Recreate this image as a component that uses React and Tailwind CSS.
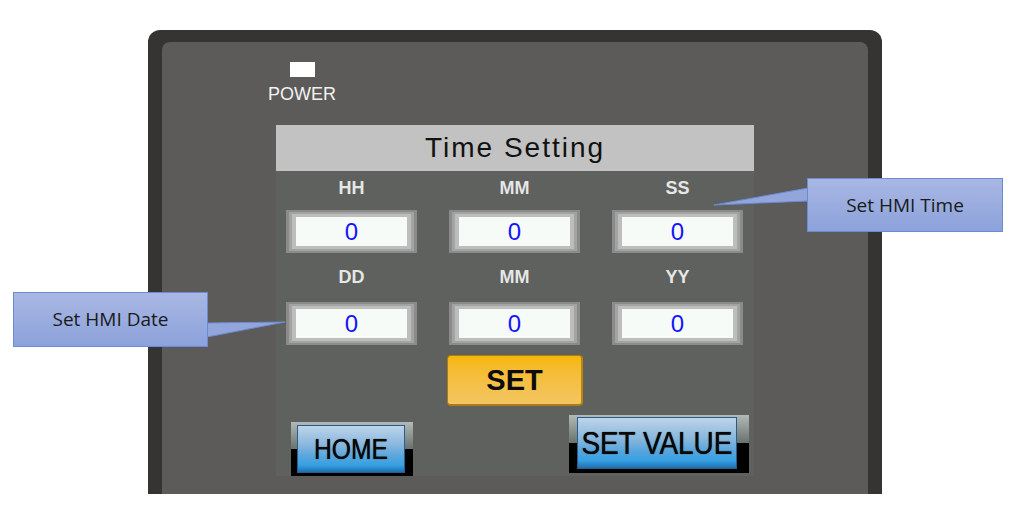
import React from "react";

function ValueBox({ value }) {
  return (
    <div className="w-[131px] h-[43px] bg-[#8b8b8b] px-[3px] py-[2px]">
      <div className="h-full bg-[#a3a3a3] px-[3px] py-[2px]">
        <div className="h-full bg-[#bdbdbd] px-[4px] py-[3px]">
          <div className="h-full bg-[#f6fbf7] flex items-center justify-center text-[24px] leading-none text-[#1414ff] font-['Liberation_Sans',Arial,sans-serif]">
            {value}
          </div>
        </div>
      </div>
    </div>
  );
}

function Label({ children }) {
  return (
    <div className="w-[131px] h-[22px] leading-[22px] text-center font-bold text-[18px] text-[#e6e6e6] font-['Liberation_Sans',Arial,sans-serif]">
      {children}
    </div>
  );
}

export default function App() {
  return (
    <div className="relative w-[1024px] h-[532px] bg-white overflow-hidden font-['Liberation_Sans',Arial,sans-serif]">
      <div className="pt-[30px] pl-[148px]">
        {/* HMI frame */}
        <div className="w-[734px] h-[464px] bg-[#353432] rounded-t-[12px] pt-[12px] px-[14px] flex flex-col">
          <div className="flex-1 bg-[#5c5b59] rounded-t-[8px] flex flex-col">
            {/* Power LED */}
            <div className="ml-[105px] w-[70px] pt-[20px] flex flex-col items-center">
              <div className="w-[25px] h-[15px] bg-white" />
              <div className="mt-[7px] h-[20px] leading-[20px] text-[18px] text-[#f2f2f2]">POWER</div>
            </div>

            {/* Screen */}
            <div className="ml-[114px] mt-[21px] w-[478px] h-[351px] flex flex-col">
              <div className="h-[46px] bg-[#c2c2c2] flex items-center justify-center text-[28px] tracking-[2px] text-[#111]">
                Time Setting
              </div>
              <div className="flex-1 bg-[#5e615d] flex flex-col pt-[6px]">
                <div className="flex gap-[32px] pl-[10px]">
                  <Label>HH</Label>
                  <Label>MM</Label>
                  <Label>SS</Label>
                </div>
                <div className="flex gap-[32px] pl-[10px] mt-[11px]">
                  <ValueBox value="0" />
                  <ValueBox value="0" />
                  <ValueBox value="0" />
                </div>
                <div className="flex gap-[32px] pl-[10px] mt-[13px]">
                  <Label>DD</Label>
                  <Label>MM</Label>
                  <Label>YY</Label>
                </div>
                <div className="flex gap-[32px] pl-[10px] mt-[14px]">
                  <ValueBox value="0" />
                  <ValueBox value="0" />
                  <ValueBox value="0" />
                </div>

                {/* SET button */}
                <div className="mt-[10px] flex justify-center">
                  <div className="w-[136px] h-[51px] rounded-[4px] border border-[#a97c14] border-r-[2px] border-b-[2px] border-r-[#b8860e] bg-linear-to-b from-[#f6b700] to-[#f4c660] flex items-center justify-center text-[29px] font-bold text-[#0c0c0c] leading-none">
                    SET
                  </div>
                </div>

                {/* Bottom buttons */}
                <div className="mt-[9px] flex justify-between items-start pl-[15px] pr-[5px]">
                  <div className="mt-[7px] w-[122px] h-[54px] bg-[linear-gradient(to_bottom,#b2bab8_0%,#6a7270_50%,#000_50%,#000_100%)] pl-[6px] pr-[8px] pt-[3px] pb-[3px]">
                    <div className="h-full border border-[#2b5d8c] bg-[linear-gradient(to_bottom,#bcd4ea_0%,#8bb8de_40%,#5aa6dc_65%,#36a0e4_85%,#1f6fae_100%)] flex items-center justify-center overflow-visible">
                      <span className="text-[30px] leading-none text-[#080808] scale-x-[0.82] whitespace-nowrap [text-shadow:0_0_1px_#000]">HOME</span>
                    </div>
                  </div>
                  <div className="w-[180px] h-[58px] bg-[linear-gradient(to_bottom,#b2bab8_0%,#6a7270_48%,#000_48%,#000_100%)] pl-[8px] pr-[12px] pt-[2px] pb-[4px]">
                    <div className="h-full border border-[#2b5d8c] bg-[linear-gradient(to_bottom,#bcd4ea_0%,#8bb8de_40%,#5aa6dc_65%,#36a0e4_85%,#1f6fae_100%)] flex items-center justify-center overflow-visible">
                      <span className="text-[31px] leading-none text-[#080808] scale-x-[0.9] whitespace-nowrap [text-shadow:0_0_1px_#000]">SET VALUE</span>
                    </div>
                  </div>
                </div>
              </div>
            </div>
          </div>
        </div>
      </div>

      {/* Callout pointers */}
      <svg className="absolute left-0 top-0 pointer-events-none" width="1024" height="532" viewBox="0 0 1024 532">
        <polygon points="808,188 714,205 808,201" fill="#93a6dc" stroke="#6b8bd2" strokeWidth="1" />
        <polygon points="207,323 285,322 207,337" fill="#93a6dc" stroke="#6b8bd2" strokeWidth="1" />
      </svg>

      {/* Callout boxes */}
      <div className="absolute left-[807px] top-[178px] w-[196px] h-[54px] border border-[#6b8bd2] bg-linear-to-b from-[#a9b7e3] to-[#8ca2db] flex items-center justify-center text-[19px] text-[#1a1a1a] font-['Open_Sans',sans-serif]">
        Set HMI Time
      </div>
      <div className="absolute left-[13px] top-[292px] w-[195px] h-[55px] border border-[#6b8bd2] bg-linear-to-b from-[#a9b7e3] to-[#8ca2db] flex items-center justify-center text-[19px] text-[#1a1a1a] font-['Open_Sans',sans-serif]">
        Set HMI Date
      </div>
    </div>
  );
}
